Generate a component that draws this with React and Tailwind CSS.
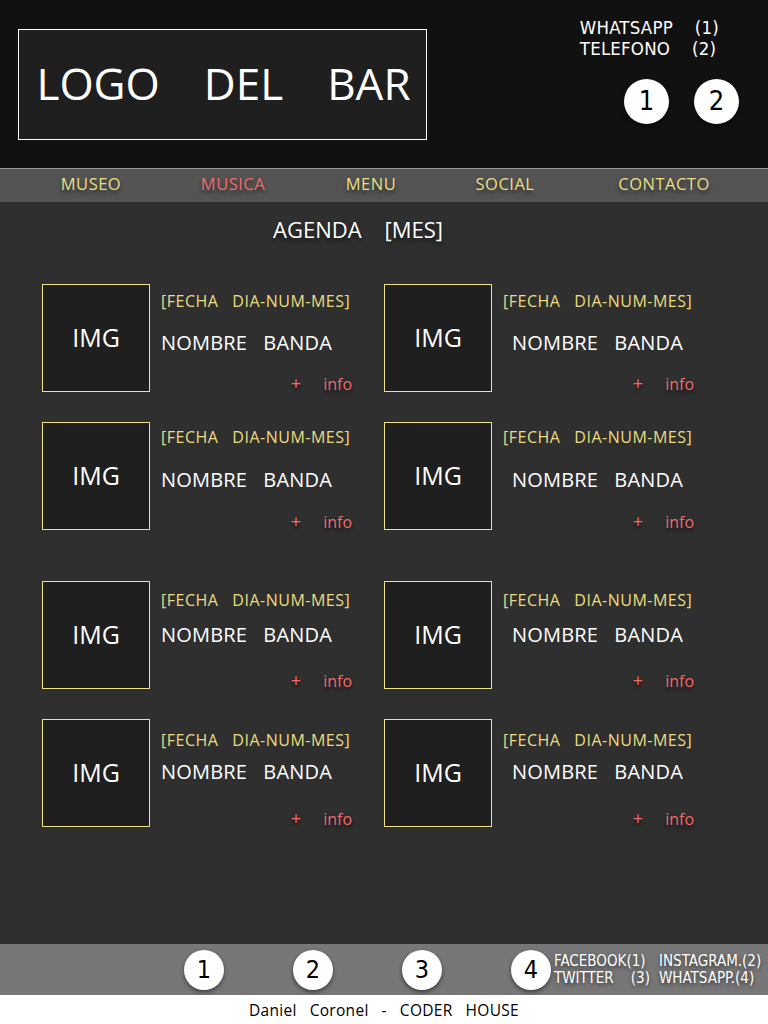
const cards = [
  { id: 1, mt: "mt-0", pt: "pt-[6px]", nm: "mt-[18px]", im: "mt-[16px]" },
  { id: 2, mt: "mt-[30px]", pt: "pt-[4px]", nm: "mt-[19px]", im: "mt-[17px]" },
  { id: 3, mt: "mt-[51px]", pt: "pt-[8px]", nm: "mt-[11px]", im: "mt-[21px]" },
  { id: 4, mt: "mt-[30px]", pt: "pt-[10px]", nm: "mt-[8px]", im: "mt-[22px]" },
];

const navItems = [
  { label: "MUSEO", ml: "ml-[31px]" },
  { label: "MUSICA", ml: "ml-[22px]", active: true },
  { label: "MENU", ml: "ml-[18px]" },
  { label: "SOCIAL", ml: "ml-[14px]" },
  { label: "CONTACTO", ml: "ml-[39px]" },
];

function Circle({ n, size }) {
  return (
    <div
      className={`${size} rounded-full bg-white text-black flex items-center justify-center shadow-[0_2px_4px_rgba(0,0,0,0.5)]`}
    >
      {n}
    </div>
  );
}

function Card({ right, row }) {
  return (
    <div className="flex w-[310px] h-[108px]">
      <div className="w-[108px] h-[108px] shrink-0 border border-[#f0e38a] bg-[#1f1f1f] flex items-center justify-center text-[25px] text-white">
        IMG
      </div>
      <div className={`flex-1 pl-[11px] flex flex-col ${row.pt}`}>
        <p className="text-[16px] text-[#ebdd7f] tracking-[0.5px] leading-[22px] whitespace-nowrap">
          [FECHA&nbsp;&nbsp;&nbsp;DIA-NUM-MES]
        </p>
        <p
          className={`text-[20px] text-white leading-[26px] tracking-[0.2px] whitespace-nowrap ${row.nm} ${right ? "pl-[9px]" : ""}`}
        >
          NOMBRE&nbsp;&nbsp;&nbsp;BANDA
        </p>
        <p
          className={`flex justify-end items-baseline gap-[22px] text-[16px] text-[#f26a6a] leading-[22px] whitespace-nowrap [text-shadow:0_3px_4px_rgba(0,0,0,0.6)] ${row.im}`}
        >
          <span className="text-[18px]">+</span>
          <span>info</span>
        </p>
      </div>
    </div>
  );
}

export default function App() {
  return (
    <div className="w-[768px] h-[1024px] flex flex-col bg-[#2f2f2f] font-['Open_Sans',sans-serif]">
      <header className="h-[169px] bg-[#111111] flex justify-between border-b border-[#9a9a9a]">
        <div className="mt-[29px] ml-[18px] w-[409px] h-[111px] border border-white bg-[#1f1f1f] flex items-center justify-center gap-[44px] text-[44px] text-white leading-none pb-[4px] pl-[2px]">
          <span>LOGO</span>
          <span>DEL</span>
          <span>BAR</span>
        </div>
        <div className="pt-[17px] pr-[29px] flex flex-col items-end">
          <div className="mr-[20px] text-[18.5px] leading-[21px] text-white font-['DejaVu_Sans_Condensed',sans-serif] tracking-[0.2px] whitespace-nowrap">
            <p>WHATSAPP&nbsp;&nbsp;&nbsp;&nbsp;(1)</p>
            <p>TELEFONO&nbsp;&nbsp;&nbsp;&nbsp;(2)</p>
          </div>
          <div className="flex gap-[25px] mt-[20px] text-[27px] font-['DejaVu_Sans_Condensed',sans-serif]">
            <Circle n="1" size="w-[45px] h-[45px]" />
            <Circle n="2" size="w-[45px] h-[45px]" />
          </div>
        </div>
      </header>

      <nav className="h-[33px] bg-[#545454] flex items-center pb-[3px] text-[16.5px] tracking-[0.5px] text-[#ecdf84] [text-shadow:0_3px_4px_rgba(0,0,0,0.55)]">
        {navItems.map((item) => (
          <span
            key={item.label}
            className={`w-[120px] text-center ${item.ml} ${item.active ? "text-[#f46b6b]" : ""}`}
          >
            {item.label}
          </span>
        ))}
      </nav>

      <main className="flex-1 flex flex-col">
        <h1 className="text-center text-[22px] text-white mt-[13px] pr-[52px] leading-[28px] [text-shadow:0_3px_4px_rgba(0,0,0,0.6)]">
          AGENDA&nbsp;&nbsp;&nbsp;&nbsp;[MES]
        </h1>
        <div className="mt-[41px] pl-[42px] flex flex-col">
          {cards.map((c) => (
            <div key={c.id} className={`flex gap-[32px] ${c.mt}`}>
              <Card row={c} />
              <Card row={c} right />
            </div>
          ))}
        </div>
      </main>

      <footer className="h-[51px] bg-[#777777] flex items-center">
        <div className="ml-[184px] flex gap-[69px] text-[25px] font-['DejaVu_Sans_Condensed',sans-serif]">
          <Circle n="1" size="w-[40px] h-[40px]" />
          <Circle n="2" size="w-[40px] h-[40px]" />
          <Circle n="3" size="w-[40px] h-[40px]" />
          <Circle n="4" size="w-[40px] h-[40px]" />
        </div>
        <div className="ml-[3px] grid grid-cols-[105px_auto] text-[15px] leading-[17px] text-white font-['DejaVu_Sans_Condensed',sans-serif] whitespace-nowrap [text-shadow:0_2px_4px_rgba(0,0,0,0.6)]">
          <span>FACEBOOK(1)</span>
          <span>INSTAGRAM.(2)</span>
          <span>TWITTER&nbsp;&nbsp;&nbsp;&nbsp;(3)</span>
          <span>WHATSAPP.(4)</span>
        </div>
      </footer>

      <div className="h-[29px] bg-white flex items-center justify-center pt-[3px] text-[15.5px] text-black tracking-[0.3px]">
        Daniel&nbsp;&nbsp;&nbsp;Coronel&nbsp;&nbsp;&nbsp;-&nbsp;&nbsp;&nbsp;CODER&nbsp;&nbsp;&nbsp;HOUSE
      </div>
    </div>
  );
}
